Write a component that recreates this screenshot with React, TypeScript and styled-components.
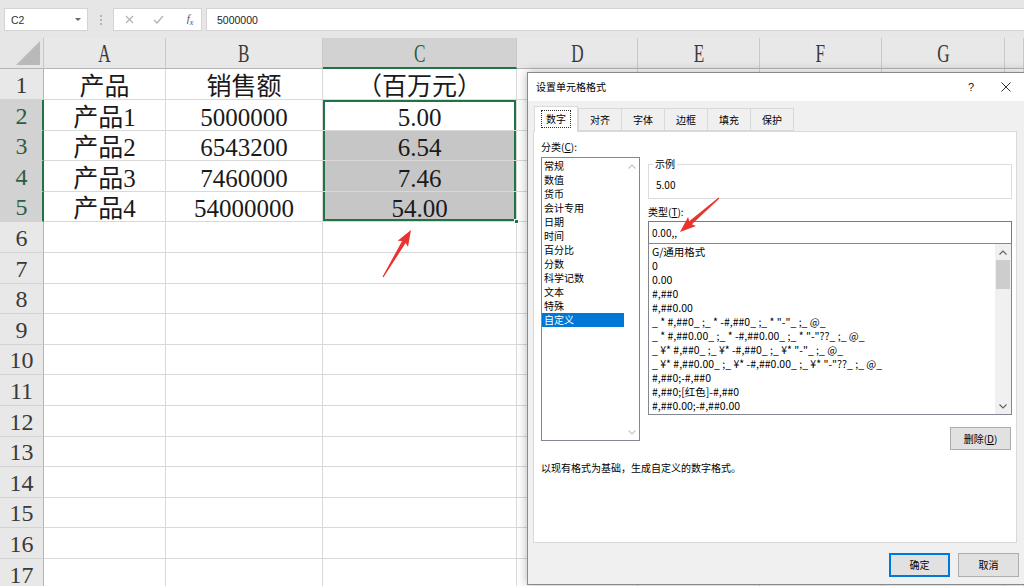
import React from 'react';
import styled, { createGlobalStyle } from 'styled-components';

const GlobalStyle = createGlobalStyle`
  html, body { margin: 0; padding: 0; background: #fff; overflow: hidden; }
  #root { width: 1024px; height: 586px; }
  * { box-sizing: border-box; }
`;

const GREEN = '#217346';
const SHEET_FONT = `"Liberation Serif", "Noto Sans CJK SC", serif`;
const UI_FONT = `"Noto Sans CJK SC", "Noto Sans", sans-serif`;

const Screen = styled.div`
  position: relative;
  width: 1024px;
  height: 586px;
  overflow: hidden;
  background: #fff;
  font-family: ${UI_FONT};
`;

/* ---------- formula bar ---------- */
const FormulaBar = styled.div`
  height: 38px;
  background: #e6e6e6;
  display: flex;
  align-items: flex-start;
  padding: 8px 0 0 4px;
`;
const NameBox = styled.div`
  width: 84px;
  height: 23px;
  background: #fff;
  border: 1px solid #d4d4d4;
  display: flex;
  align-items: center;
  justify-content: space-between;
  padding: 0 6px 0 6px;
  font: 10.5px "Liberation Sans", sans-serif;
  color: #333;
`;
const DropTri = styled.span`
  width: 0;
  height: 0;
  border-left: 3px solid transparent;
  border-right: 3px solid transparent;
  border-top: 3px solid #666;
`;
const Grip = styled.div`
  width: 25px;
  height: 23px;
  display: flex;
  flex-direction: column;
  align-items: center;
  justify-content: center;
  gap: 2px;
`;
const GripDot = styled.span`
  width: 2px;
  height: 2px;
  background: #b4b4b4;
`;
const FuncBox = styled.div`
  width: 89px;
  height: 23px;
  background: #fff;
  border: 1px solid #d4d4d4;
  display: flex;
  align-items: center;
  padding: 0 0 0 10px;
`;
const FuncIcon = styled.span<{ $w: number }>`
  width: ${(p) => p.$w}px;
  display: flex;
  align-items: center;
  justify-content: center;
  color: #b0b0b0;
`;
const Fx = styled.span`
  font: italic 11px "Liberation Serif", serif;
  color: #555;
  & sub { font-size: 8px; }
`;
const FormulaInput = styled.div`
  flex: 1;
  height: 23px;
  margin-left: 4px;
  background: #fff;
  border: 1px solid #d4d4d4;
  border-right: none;
  display: flex;
  align-items: center;
  padding-left: 10px;
  font: 10.5px "Liberation Sans", sans-serif;
  color: #222;
`;

/* ---------- sheet ---------- */
const SheetGrid = styled.div<{ $rows: string }>`
  display: grid;
  grid-template-columns: 44px 122px 157px 194px 121px 122px 122px 123px 1fr;
  grid-template-rows: ${(p) => p.$rows};
  font-family: ${SHEET_FONT};
`;
const Corner = styled.div`
  position: relative;
  background: #e6e6e6;
  border-right: 1px solid #c6c6c6;
  border-bottom: 1px solid #b5b5b5;
  &::after {
    content: '';
    position: absolute;
    right: 3px;
    bottom: 3px;
    width: 0;
    height: 0;
    border-left: 24px solid transparent;
    border-bottom: 24px solid #b9b9b9;
  }
`;
const ColHead = styled.div<{ $hi?: boolean }>`
  background: ${(p) => (p.$hi ? '#d2d2d2' : '#e8e8e8')};
  border-right: 1px solid #c8c8c8;
  border-bottom: ${(p) => (p.$hi ? `2px solid ${GREEN}` : '1px solid #b5b5b5')};
  display: flex;
  align-items: flex-end;
  justify-content: center;
  color: ${(p) => (p.$hi ? '#2d5e43' : '#3a3a3a')};
  font-size: 26px;
  line-height: 26px;
  padding-bottom: ${(p) => (p.$hi ? 0 : 1)}px;
`;
const Letter = styled.span`
  display: inline-block;
  transform: scaleX(0.66);
`;
const RowHead = styled.div<{ $hi?: boolean }>`
  background: ${(p) => (p.$hi ? '#d2d2d2' : '#e8e8e8')};
  border-bottom: 1px solid #d2d2d2;
  border-right: ${(p) => (p.$hi ? `2px solid ${GREEN}` : '1px solid #b5b5b5')};
  display: flex;
  align-items: flex-end;
  justify-content: center;
  color: ${(p) => (p.$hi ? '#2d5e43' : '#3a3a3a')};
  font-size: 24px;
  line-height: 24px;
  padding-bottom: 2px;
  padding-left: ${(p) => (p.$hi ? 1 : 0)}px;
`;
type Edge = { t?: boolean; b?: boolean; l?: boolean; r?: boolean };
const edgeShadow = (e?: Edge) => {
  if (!e) return 'none';
  const s: string[] = [];
  if (e.l) s.push(`inset 2px 0 0 ${GREEN}`);
  if (e.r) s.push(`inset -2px 0 0 ${GREEN}`);
  if (e.t) s.push(`inset 0 2px 0 ${GREEN}`);
  if (e.b) s.push(`inset 0 -2px 0 ${GREEN}`);
  return s.join(', ');
};
const Cell = styled.div<{ $fill?: boolean; $edge?: Edge }>`
  position: relative;
  background: ${(p) => (p.$fill ? '#c6c6c6' : '#fff')};
  border-right: 1px solid #d9d9d9;
  border-bottom: 1px solid #d9d9d9;
  box-shadow: ${(p) => edgeShadow(p.$edge)};
  display: flex;
  align-items: flex-end;
  justify-content: center;
  font-size: 25px;
  line-height: 25px;
  color: #1a1a1a;
  white-space: nowrap;
`;
const FillHandle = styled.span`
  position: absolute;
  right: -3px;
  bottom: -3px;
  width: 5px;
  height: 5px;
  background: ${GREEN};
  border: 1px solid #fff;
  z-index: 2;
`;

/* ---------- dialog ---------- */
const Dialog = styled.div`
  position: absolute;
  left: 527px;
  top: 72px;
  width: 500px;
  height: 513px;
  background: #f0f0f0;
  border: 1px solid #8a8a8a;
  box-shadow: 0 0 10px rgba(0, 0, 0, 0.3);
  display: flex;
  flex-direction: column;
  font: 10px/12px ${UI_FONT};
  color: #000;
  z-index: 5;
`;
const TitleBar = styled.div`
  height: 28px;
  background: #fff;
  display: flex;
  align-items: center;
  padding-left: 8px;
  font-size: 10px;
`;
const TitleText = styled.span`
  flex: 1;
`;
const TitleBtn = styled.span<{ $w: number }>`
  width: ${(p) => p.$w}px;
  height: 28px;
  display: flex;
  align-items: center;
  justify-content: center;
  font: 11px "Liberation Sans", sans-serif;
  color: #222;
`;
const Tabs = styled.div`
  display: flex;
  align-items: flex-end;
  margin: 5px 0 0 6px;
  height: 25px;
`;
const Tab = styled.div<{ $active?: boolean }>`
  position: relative;
  z-index: ${(p) => (p.$active ? 2 : 1)};
  width: 44px;
  height: ${(p) => (p.$active ? 26 : 23)}px;
  margin-bottom: ${(p) => (p.$active ? -1 : 0)}px;
  margin-right: ${(p) => (p.$active ? 0 : -1)}px;
  background: ${(p) => (p.$active ? '#fff' : '#f0f0f0')};
  border: 1px solid #d9d9d9;
  border-bottom: ${(p) => (p.$active ? 'none' : '1px solid #d9d9d9')};
  display: flex;
  align-items: center;
  justify-content: center;
  padding-bottom: ${(p) => (p.$active ? 1 : 0)}px;
`;
const FocusText = styled.span`
  outline: 1px dotted #333;
  outline-offset: 1px;
  padding: 1px 3px;
`;
const Panel = styled.div`
  margin-left: 5px;
  width: 484px;
  height: 412px;
  background: #fff;
  border: 1px solid #d9d9d9;
  padding: 9px 0 0 7px;
  display: flex;
  flex-direction: column;
`;
const PanelGrid = styled.div`
  display: grid;
  grid-template-columns: 99px 364px;
  column-gap: 8px;
  row-gap: 4px;
`;
const Label = styled.div`
  line-height: 12px;
  white-space: nowrap;
`;
const ListBox = styled.div<{ $h: number }>`
  height: ${(p) => p.$h}px;
  border: 1px solid #828790;
  background: #fff;
  display: flex;
  overflow: hidden;
`;
const ListItems = styled.div<{ $size?: number }>`
  flex: 1;
  padding-top: 1px;
  min-width: 0;
  font-size: ${(p) => p.$size ?? 10}px;
`;
const ListItem = styled.div<{ $sel?: boolean; $pad: number }>`
  height: 14px;
  line-height: 14px;
  padding-left: ${(p) => p.$pad}px;
  background: ${(p) => (p.$sel ? '#0078d7' : 'transparent')};
  color: ${(p) => (p.$sel ? '#fff' : '#000')};
  white-space: pre;
  overflow: hidden;
`;
const ScrollBar = styled.div<{ $w: number; $bg: string }>`
  width: ${(p) => p.$w}px;
  background: ${(p) => p.$bg};
  display: flex;
  flex-direction: column;
`;
const ScrollArrow = styled.div`
  height: 16px;
  display: flex;
  align-items: center;
  justify-content: center;
`;
const ScrollTrack = styled.div`
  flex: 1;
  padding: 0 1px;
`;
const Thumb = styled.div`
  height: 29px;
  background: #cdcdcd;
`;
const RightCol = styled.div`
  display: flex;
  flex-direction: column;
`;
const Group = styled.fieldset`
  margin: 1px 0 0 0;
  padding: 0 4px 0 4px;
  border: 1px solid #dcdcdc;
  min-inline-size: 0;
  height: 41px;
`;
const Legend = styled.legend`
  padding: 0 2px;
  line-height: 12px;
  font-size: 10px;
`;
const GroupValue = styled.div`
  margin-top: 8px;
  padding-left: 3px;
  line-height: 14px;
`;
const TypeLabel = styled(Label)`
  margin-top: 7px;
`;
const TextInput = styled.div`
  margin-top: 3px;
  height: 23px;
  border: 1px solid #7a7a7a;
  display: flex;
  align-items: center;
  padding-left: 3px;
  background: #fff;
`;
const TypeList = styled(ListBox)`
  margin-top: -1px;
`;
const Button = styled.div<{ $default?: boolean }>`
  width: 61px;
  height: 24px;
  background: #e1e1e1;
  border: ${(p) => (p.$default ? '2px solid #0078d7' : '1px solid #adadad')};
  display: flex;
  align-items: center;
  justify-content: center;
  font-size: 10px;
`;
const DeleteBtn = styled(Button)`
  align-self: flex-end;
  margin-top: 12px;
  height: 23px;
  margin-right: 1px;
`;
const Description = styled.div`
  margin-top: 12px;
  line-height: 12px;
`;
const Footer = styled.div`
  display: flex;
  justify-content: flex-end;
  gap: 8px;
  padding: 10px 7px 0 0;
`;

const Overlay = styled.svg`
  position: absolute;
  left: 0;
  top: 0;
  width: 1024px;
  height: 586px;
  pointer-events: none;
  z-index: 10;
`;

const Chevron = ({ up, color }: { up?: boolean; color: string }) => (
  <svg width="8" height="5" viewBox="0 0 8 5">
    <polyline
      points={up ? '0.5,4.5 4,1 7.5,4.5' : '0.5,0.5 4,4 7.5,0.5'}
      fill="none"
      stroke={color}
      strokeWidth="1.1"
    />
  </svg>
);

const Arrow = ({ x1, y1, x2, y2 }: { x1: number; y1: number; x2: number; y2: number }) => {
  const dx = x2 - x1;
  const dy = y2 - y1;
  const L = Math.hypot(dx, dy);
  const ux = dx / L;
  const uy = dy / L;
  const nx = -uy;
  const ny = ux;
  const head = 14;
  const hw = 6;
  const sw = 2;
  const tw = 0.6;
  const bx = x2 - ux * head;
  const by = y2 - uy * head;
  const gx = x2 - ux * (head + 2);
  const gy = y2 - uy * (head + 2);
  const pts = [
    [x1 + nx * tw, y1 + ny * tw],
    [bx + nx * sw, by + ny * sw],
    [gx + nx * hw, gy + ny * hw],
    [x2, y2],
    [gx - nx * hw, gy - ny * hw],
    [bx - nx * sw, by - ny * sw],
    [x1 - nx * tw, y1 - ny * tw],
  ];
  return <polygon points={pts.map((p) => p.map((v) => v.toFixed(1)).join(',')).join(' ')} fill="#e8332f" />;
};

const COLS = ['A', 'B', 'C', 'D', 'E', 'F', 'G', ''];
const DATA: string[][] = [
  ['产品', '销售额', '（百万元）'],
  ['产品1', '5000000', '5.00'],
  ['产品2', '6543200', '6.54'],
  ['产品3', '7460000', '7.46'],
  ['产品4', '54000000', '54.00'],
];
const CATEGORIES = ['常规', '数值', '货币', '会计专用', '日期', '时间', '百分比', '分数', '科学记数', '文本', '特殊', '自定义'];
const TYPES = [
  'G/通用格式',
  '0',
  '0.00',
  '#,##0',
  '#,##0.00',
  '_ * #,##0_ ;_ * -#,##0_ ;_ * "-"_ ;_ @_',
  '_ * #,##0.00_ ;_ * -#,##0.00_ ;_ * "-"??_ ;_ @_',
  '_ ¥* #,##0_ ;_ ¥* -#,##0_ ;_ ¥* "-"_ ;_ @_',
  '_ ¥* #,##0.00_ ;_ ¥* -#,##0.00_ ;_ ¥* "-"??_ ;_ @_',
  '#,##0;-#,##0',
  '#,##0;[红色]-#,##0',
  '#,##0.00;-#,##0.00',
];

export default function App() {
  const bounds = Array.from({ length: 18 }, (_, i) => Math.round(69.4 + 30.6 * i));
  const heights = bounds.slice(1).map((b, i) => b - bounds[i]);
  const rowsTemplate = `31px ${heights.map((h) => `${h}px`).join(' ')}`;

  const edgeFor = (r: number): Edge | undefined => {
    if (r < 1 || r > 4) return undefined;
    return { l: true, r: true, t: r === 1, b: r === 4 };
  };

  return (
    <Screen>
      <GlobalStyle />
      <FormulaBar>
        <NameBox>
          <span>C2</span>
          <DropTri />
        </NameBox>
        <Grip>
          <GripDot />
          <GripDot />
          <GripDot />
        </Grip>
        <FuncBox>
          <FuncIcon $w={10}>
            <svg width="9" height="9" viewBox="0 0 9 9">
              <path d="M1 1 L8 8 M8 1 L1 8" stroke="#b0b0b0" strokeWidth="1.1" />
            </svg>
          </FuncIcon>
          <FuncIcon $w={48}>
            <svg width="11" height="9" viewBox="0 0 11 9">
              <path d="M1 5 L4 8 L10 1" stroke="#b0b0b0" strokeWidth="1.2" fill="none" />
            </svg>
          </FuncIcon>
          <FuncIcon $w={16}>
            <Fx>
              f<sub>x</sub>
            </Fx>
          </FuncIcon>
        </FuncBox>
        <FormulaInput>5000000</FormulaInput>
      </FormulaBar>

      <SheetGrid $rows={rowsTemplate}>
        <Corner />
        {COLS.map((c, i) => (
          <ColHead key={`h${i}`} $hi={c === 'C'}>
            <Letter>{c}</Letter>
          </ColHead>
        ))}
        {heights.map((_, r) => (
          <React.Fragment key={`r${r}`}>
            <RowHead $hi={r >= 1 && r <= 4}>{r + 1}</RowHead>
            {COLS.map((_, c) => {
              const text = DATA[r]?.[c] ?? '';
              const isC = c === 2;
              return (
                <Cell key={`c${r}-${c}`} $fill={isC && r >= 2 && r <= 4} $edge={isC ? edgeFor(r) : undefined}>
                  {text}
                  {isC && r === 4 && <FillHandle />}
                </Cell>
              );
            })}
          </React.Fragment>
        ))}
      </SheetGrid>

      <Dialog>
        <TitleBar>
          <TitleText>设置单元格格式</TitleText>
          <TitleBtn $w={30}>?</TitleBtn>
          <TitleBtn $w={40}>
            <svg width="10" height="10" viewBox="0 0 10 10">
              <path d="M0.5 0.5 L9.5 9.5 M9.5 0.5 L0.5 9.5" stroke="#333" strokeWidth="1" />
            </svg>
          </TitleBtn>
        </TitleBar>
        <Tabs>
          <Tab $active>
            <FocusText>数字</FocusText>
          </Tab>
          <Tab>对齐</Tab>
          <Tab>字体</Tab>
          <Tab>边框</Tab>
          <Tab>填充</Tab>
          <Tab>保护</Tab>
        </Tabs>
        <Panel>
          <PanelGrid>
            <Label>
              分类(<u>C</u>):
            </Label>
            <span />
            <ListBox $h={284}>
              <ListItems>
                {CATEGORIES.map((c) => (
                  <ListItem key={c} $pad={2} $sel={c === '自定义'}>
                    {c}
                  </ListItem>
                ))}
              </ListItems>
              <ScrollBar $w={15} $bg="#fff">
                <ScrollArrow>
                  <Chevron up color="#c4c4c4" />
                </ScrollArrow>
                <ScrollTrack />
                <ScrollArrow>
                  <Chevron color="#c4c4c4" />
                </ScrollArrow>
              </ScrollBar>
            </ListBox>
            <RightCol>
              <Group>
                <Legend>示例</Legend>
                <GroupValue>5.00</GroupValue>
              </Group>
              <TypeLabel>
                类型(<u>T</u>):
              </TypeLabel>
              <TextInput>0.00,,</TextInput>
              <TypeList $h={172}>
                <ListItems $size={10.5}>
                  {TYPES.map((t) => (
                    <ListItem key={t} $pad={3}>
                      {t}
                    </ListItem>
                  ))}
                </ListItems>
                <ScrollBar $w={16} $bg="#f0f0f0">
                  <ScrollArrow>
                    <Chevron up color="#606060" />
                  </ScrollArrow>
                  <ScrollTrack>
                    <Thumb />
                  </ScrollTrack>
                  <ScrollArrow>
                    <Chevron color="#606060" />
                  </ScrollArrow>
                </ScrollBar>
              </TypeList>
              <DeleteBtn>
                <span>
                  删除(<u>D</u>)
                </span>
              </DeleteBtn>
            </RightCol>
          </PanelGrid>
          <Description>以现有格式为基础，生成自定义的数字格式。</Description>
        </Panel>
        <Footer>
          <Button $default>确定</Button>
          <Button>取消</Button>
        </Footer>
      </Dialog>

      <Overlay viewBox="0 0 1024 586">
        <Arrow x1={383} y1={277} x2={411} y2={230} />
        <Arrow x1={719} y1={198} x2={680} y2={232} />
      </Overlay>
    </Screen>
  );
}
